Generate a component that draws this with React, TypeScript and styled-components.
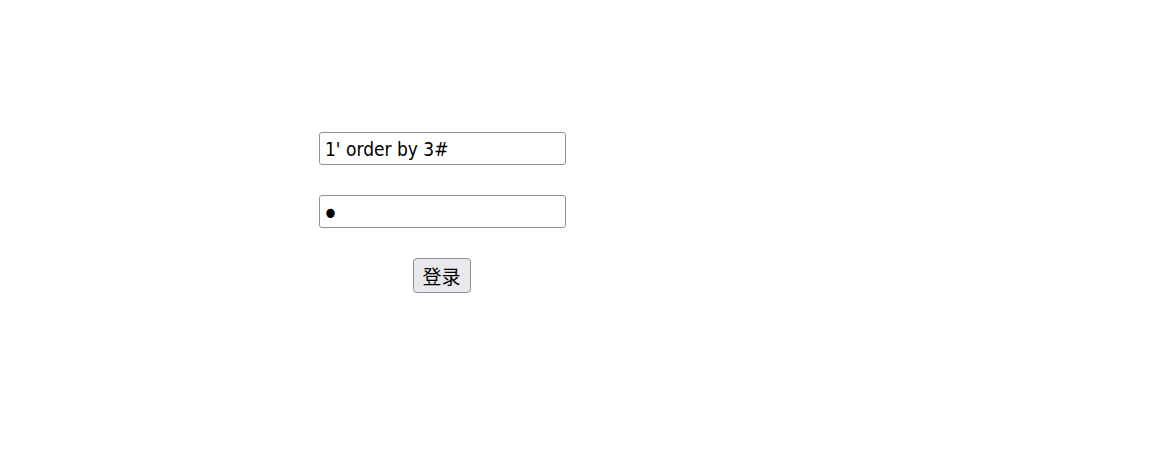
import styled, { createGlobalStyle } from 'styled-components';

const GlobalStyle = createGlobalStyle`
  html, body {
    margin: 0;
    padding: 0;
    background: #ffffff;
  }
  body {
    font-family: "DejaVu Sans Condensed", "DejaVu Sans", "Noto Sans CJK SC", sans-serif;
  }
`;

const Page = styled.div`
  width: 1171px;
  height: 453px;
  padding: 132px 0 0 319px;
  box-sizing: border-box;
`;

const Form = styled.form`
  display: flex;
  flex-direction: column;
  align-items: center;
  gap: 30px;
  width: 247px;
  margin: 0;
`;

const Field = styled.input<{ $masked?: boolean }>`
  box-sizing: border-box;
  width: 247px;
  height: 33px;
  padding: ${p => (p.$masked ? '4px 4px 0 2px' : '0 5px')};
  border: 1px solid #8f8f9d;
  border-radius: 3px;
  background: #ffffff;
  color: #000000;
  font-family: "DejaVu Sans Condensed", "DejaVu Sans", sans-serif;
  font-size: ${p => (p.$masked ? '32px' : '19px')};
  line-height: normal;
  outline: none;
`;

const SubmitButton = styled.button`
  box-sizing: border-box;
  width: 58px;
  height: 35px;
  margin-right: 2px;
  padding: 0;
  border: 1px solid #8f8f9d;
  border-radius: 4px;
  background: #e9e9ed;
  color: #000000;
  font-family: "Noto Sans CJK SC", sans-serif;
  font-size: 19px;
  cursor: pointer;
`;

const App = () => {
  return (
    <>
      <GlobalStyle />
      <Page>
        <Form onSubmit={e => e.preventDefault()}>
          <Field type="text" name="username" defaultValue="1' order by 3#" />
          <Field $masked type="password" name="password" defaultValue="1" />
          <SubmitButton type="submit">登录</SubmitButton>
        </Form>
      </Page>
    </>
  );
};

export default App;
